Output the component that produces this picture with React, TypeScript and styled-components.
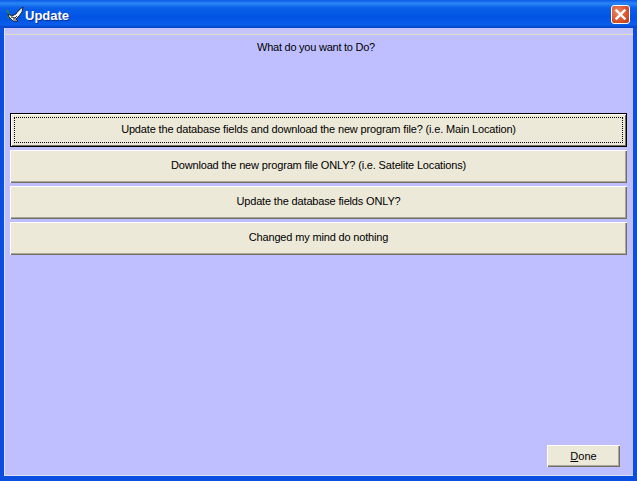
import React from "react";
import styled, { createGlobalStyle } from "styled-components";

const Global = createGlobalStyle`
  html, body { margin: 0; padding: 0; background: #0a47d6; }
  #root { width: 637px; height: 481px; overflow: hidden; }
`;

const Window = styled.div`
  width: 637px;
  height: 481px;
  box-sizing: border-box;
  display: flex;
  flex-direction: column;
  background: #0b4fe0;
  font-family: "Liberation Sans", Arial, sans-serif;
`;

const TitleBar = styled.div`
  height: 28px;
  flex: none;
  box-sizing: border-box;
  display: flex;
  align-items: center;
  padding: 1px 7px 0 5px;
  gap: 1px;
  background: linear-gradient(180deg, #0a5ae6 0%, #2a86f6 12%, #0a5fe8 28%, #0054e3 60%, #0a5cea 88%, #0340c4 100%);
`;

const Title = styled.span`
  flex: 1;
  color: #fff;
  font-weight: 700;
  font-size: 13px;
  padding-top: 1px;
  text-shadow: 1px 1px 0 #0a2f9c;
`;

const CloseButton = styled.div`
  width: 19px;
  height: 19px;
  box-sizing: border-box;
  border: 1px solid #fff;
  border-radius: 3px;
  background: radial-gradient(circle at 35% 35%, #ec8a68 0%, #d9502a 60%, #c03a14 100%);
  display: flex;
  align-items: center;
  justify-content: center;
`;

const Client = styled.div`
  flex: 1;
  min-height: 0;
  margin: 0 4px 5px 4px;
  padding-top: 6px;
  background: #c4c4fb;
  display: flex;
  flex-direction: column;
  border-left: 1px solid #e2e0ff;
`;

const Panel = styled.div`
  flex: 1;
  min-height: 0;
  background: #bfbfff;
  display: flex;
  flex-direction: column;
  border-top: 1px solid #e4dfc0;
  border-bottom: 1px solid #e0e0f4;
  padding: 5px 6px 8px 5px;
`;

const Prompt = styled.div`
  color: #000;
  font-size: 11px;
  letter-spacing: -0.24px;
  line-height: 14px;
  text-align: center;
  padding-right: 5px;
  margin-bottom: 59px;
`;

const Choices = styled.div`
  display: flex;
  flex-direction: column;
  gap: 3px;
`;

const Btn = styled.button<{ $focused?: boolean }>`
  position: relative;
  appearance: none;
  height: ${(p) => (p.$focused ? 34 : 33)}px;
  width: 100%;
  padding: 0 0 ${(p) => (p.$focused ? 2 : 4)}px;
  margin: 0;
  box-sizing: border-box;
  background: #ece9d8;
  color: #000;
  font-family: "Liberation Sans", Arial, sans-serif;
  font-size: 11px;
  letter-spacing: -0.16px;
  border: ${(p) => (p.$focused ? "1px solid #000" : "none")};
  box-shadow: ${(p) =>
    p.$focused
      ? "inset 1px 1px 0 #fff, inset -1px -1px 0 #716f64"
      : "inset 1px 1px 0 #fff, inset -1px -1px 0 #716f64, inset -2px -2px 0 #aca899"};
`;

const FocusRing = styled.span`
  position: absolute;
  inset: 3px;
  border: 1px dotted #000;
  pointer-events: none;
`;

const Footer = styled.div`
  margin-top: auto;
  display: flex;
  justify-content: flex-end;
  padding-right: 7px;
`;

const DoneButton = styled.button`
  appearance: none;
  width: 73px;
  height: 22px;
  padding: 0;
  box-sizing: border-box;
  background: #ece9d8;
  color: #000;
  border: none;
  font-family: "Liberation Sans", Arial, sans-serif;
  font-size: 11px;
  box-shadow: inset 1px 1px 0 #fff, inset -1px -1px 0 #716f64, inset -2px -2px 0 #aca899;
  u { text-underline-offset: 1px; }
`;

const Bird = () => (
  <svg width="19" height="18" viewBox="0 0 19 18">
    <path d="M2 4 L4 8 L3 12" stroke="#2e8b3a" strokeWidth="1.6" fill="none" />
    <path d="M3 8 L7 10 L11 8 L14 4 L18 1 L17 6 L14 10 L11 13 L13 15 L8 15 L6 13 L4 11 Z" fill="#f6f6f0" stroke="#1a1a1a" strokeWidth="0.9" />
    <path d="M6 11 L10 12 L12 10 M8 13 L11 13" stroke="#333" strokeWidth="1" fill="none" />
    <path d="M12 7 L16 3" stroke="#8a9ab0" strokeWidth="0.8" />
  </svg>
);

const CloseX = () => (
  <svg width="13" height="13" viewBox="0 0 13 13">
    <path d="M2.5 2.5 L10.5 10.5 M10.5 2.5 L2.5 10.5" stroke="#fff" strokeWidth="2.4" strokeLinecap="square" />
  </svg>
);

const choices = [
  "Update the database fields and download the new program file? (i.e. Main Location)",
  "Download the new program file ONLY? (i.e. Satelite Locations)",
  "Update the database fields ONLY?",
  "Changed my mind do nothing",
];

export default function App() {
  return (
    <Window>
      <Global />
      <TitleBar>
        <Bird />
        <Title>Update</Title>
        <CloseButton>
          <CloseX />
        </CloseButton>
      </TitleBar>
      <Client>
        <Panel>
          <Prompt>What do you want to Do?</Prompt>
          <Choices>
            {choices.map((c, i) => (
              <Btn key={c} $focused={i === 0}>
                {i === 0 && <FocusRing />}
                {c}
              </Btn>
            ))}
          </Choices>
          <Footer>
            <DoneButton>
              <u>D</u>one
            </DoneButton>
          </Footer>
        </Panel>
      </Client>
    </Window>
  );
}
